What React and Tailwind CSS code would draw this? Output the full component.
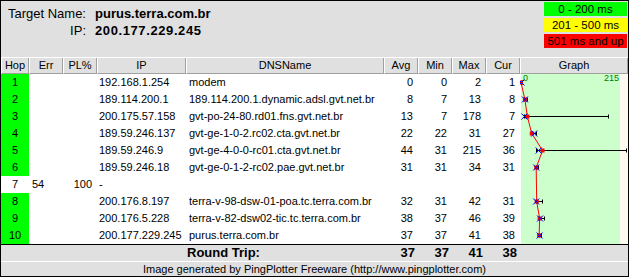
import React from 'react';

const hops = [
  { hop: 1, ip: '192.168.1.254', dns: 'modem', avg: 0, min: 0, max: 2, cur: 1 },
  { hop: 2, ip: '189.114.200.1', dns: '189.114.200.1.dynamic.adsl.gvt.net.br', avg: 8, min: 7, max: 13, cur: 8 },
  { hop: 3, ip: '200.175.57.158', dns: 'gvt-po-24-80.rd01.fns.gvt.net.br', avg: 13, min: 7, max: 178, cur: 7 },
  { hop: 4, ip: '189.59.246.137', dns: 'gvt-ge-1-0-2.rc02.cta.gvt.net.br', avg: 22, min: 22, max: 31, cur: 27 },
  { hop: 5, ip: '189.59.246.9', dns: 'gvt-ge-4-0-0-rc01.cta.gvt.net.br', avg: 44, min: 31, max: 215, cur: 36 },
  { hop: 6, ip: '189.59.246.18', dns: 'gvt-ge-0-1-2-rc02.pae.gvt.net.br', avg: 31, min: 31, max: 34, cur: 31 },
  { hop: 7, err: 54, pl: 100, ip: '-', lost: true },
  { hop: 8, ip: '200.176.8.197', dns: 'terra-v-98-dsw-01-poa.tc.terra.com.br', avg: 32, min: 31, max: 42, cur: 31 },
  { hop: 9, ip: '200.176.5.228', dns: 'terra-v-82-dsw02-tic.tc.terra.com.br', avg: 38, min: 37, max: 46, cur: 39 },
  { hop: 10, ip: '200.177.229.245', dns: 'purus.terra.com.br', avg: 37, min: 37, max: 41, cur: 38 },
];

// ms -> x inside the graph column
const gx = (ms) => 1 + ms * 0.49;

const PingPlotter = () => {
  return (
    <div className="w-[629px] h-[277px] border border-black bg-[#e0e0e0] text-black font-['Liberation_Sans',Arial,sans-serif] overflow-hidden">
      {/* target info + legend */}
      <div className="h-[56px] flex justify-between">
        <div className="pt-[4px] pl-[6px] text-[13px] leading-[17px]">
          <div className="flex">
            <div className="w-[79px] text-right">Target Name:</div>
            <div className="ml-[9px] font-bold">purus.terra.com.br</div>
          </div>
          <div className="flex">
            <div className="w-[79px] text-right">IP:</div>
            <div className="ml-[9px] font-bold tracking-[0.6px]">200.177.229.245</div>
          </div>
        </div>
        <div className="pt-[1px] mr-[1px] flex flex-col gap-[2px] text-[11.5px] leading-[14px] text-center">
          <div className="w-[83px] h-[14px] bg-[#00ff00]">0 - 200 ms</div>
          <div className="w-[83px] h-[14px] bg-[#ffff00]">201 - 500 ms</div>
          <div className="w-[83px] h-[14px] bg-[#ff0000]">501 ms and up</div>
        </div>
      </div>

      {/* column headers */}
      <div className="flex h-[17px] border-t border-white text-[11px] leading-[15px]">
        <HeadCell w="w-[28px]">Hop</HeadCell>
        <HeadCell w="w-[34px]">Err</HeadCell>
        <HeadCell w="w-[34px]">PL%</HeadCell>
        <HeadCell w="w-[89px]">IP</HeadCell>
        <HeadCell w="w-[198px]">DNSName</HeadCell>
        <HeadCell w="w-[34px]">Avg</HeadCell>
        <HeadCell w="w-[34px]">Min</HeadCell>
        <HeadCell w="w-[34px]">Max</HeadCell>
        <HeadCell w="w-[34px]">Cur</HeadCell>
        <HeadCell w="w-[108px]">Graph</HeadCell>
      </div>

      {/* hop rows + graph */}
      <div className="flex h-[170px] bg-white">
        <div className="w-[519px]">
          {hops.map((h) => (
            <Row key={h.hop} {...h} />
          ))}
        </div>
        <Graph />
      </div>

      {/* round trip */}
      <div className="flex h-[17px] border-t border-black text-[13px] font-bold leading-[16px]">
        <div className="w-[383px] pl-[186px]">Round Trip:</div>
        <div className="w-[34px] text-right pr-[3px]">37</div>
        <div className="w-[34px] text-right pr-[3px]">37</div>
        <div className="w-[34px] text-right pr-[3px]">41</div>
        <div className="w-[34px] text-right pr-[3px]">38</div>
      </div>

      <div className="h-[15px] border-t border-white text-center text-[11px] leading-[14px]">
        Image generated by PingPlotter Freeware (http://www.pingplotter.com)
      </div>
    </div>
  );
};

const HeadCell = ({ w, children }) => (
  <div className={`${w} h-full flex items-center justify-center border-l border-l-white border-r border-r-[#a0a0a0] border-b border-b-[#a0a0a0]`}>
    {children}
  </div>
);

const Row = ({ hop, err, pl, ip, dns, avg, min, max, cur, lost }) => (
  <div className="flex h-[17px] text-[11px] leading-[17px] whitespace-nowrap">
    <div className={`w-[28px] text-center ${lost ? 'bg-white' : 'bg-[#00ff00]'}`}>{hop}</div>
    <div className="w-[34px] pl-[3px]">{err}</div>
    <div className="w-[34px] text-right pr-[5px]">{pl}</div>
    <div className="w-[89px] pl-[2px]">{ip}</div>
    <div className="w-[198px] pl-[3px] overflow-hidden">{dns}</div>
    <div className="w-[34px] text-right pr-[5px]">{avg}</div>
    <div className="w-[34px] text-right pr-[5px]">{min}</div>
    <div className="w-[34px] text-right pr-[5px]">{max}</div>
    <div className="w-[34px] text-right pr-[5px]">{cur}</div>
  </div>
);

const Graph = () => {
  const pts = hops
    .map((h, i) => ({ ...h, cy: 17 * i + 8.5 }))
    .filter((h) => !h.lost);
  const line = pts.map((p) => `${gx(p.avg)},${p.cy}`).join(' ');
  return (
    <svg width="108" height="170" className="block">
      <rect x="1" y="0" width="99" height="170" fill="#ccffcc" />
      <rect x="100" y="0" width="8" height="170" fill="#fffaf0" />
      <text x="3" y="7" fontSize="9" fill="#008000" fontFamily="Liberation Sans, Arial, sans-serif">0</text>
      <text x="99" y="7" fontSize="9" fill="#008000" textAnchor="end" fontFamily="Liberation Sans, Arial, sans-serif">215</text>
      <polyline points={line} fill="none" stroke="#ff0000" strokeWidth="1" />
      {pts.map((p) => {
        const x1 = Math.round(gx(p.min)) + 0.5;
        const x2 = Math.round(gx(p.max)) + 0.5;
        const xc = gx(p.cur);
        const xa = gx(p.avg);
        return (
          <g key={p.hop}>
            <line x1={x1} y1={p.cy} x2={x2} y2={p.cy} stroke="#000" strokeWidth="1" />
            <line x1={x1} y1={p.cy - 2} x2={x1} y2={p.cy + 2} stroke="#000" strokeWidth="1" />
            <line x1={x2} y1={p.cy - 2} x2={x2} y2={p.cy + 2} stroke="#000" strokeWidth="1" />
            <rect x={xa - 2} y={p.cy - 2} width="4" height="4" fill="#ff0000" />
            <line x1={xc - 3} y1={p.cy - 3} x2={xc + 3} y2={p.cy + 3} stroke="#0000ff" strokeWidth="1" />
            <line x1={xc - 3} y1={p.cy + 3} x2={xc + 3} y2={p.cy - 3} stroke="#0000ff" strokeWidth="1" />
          </g>
        );
      })}
    </svg>
  );
};

export default PingPlotter;
